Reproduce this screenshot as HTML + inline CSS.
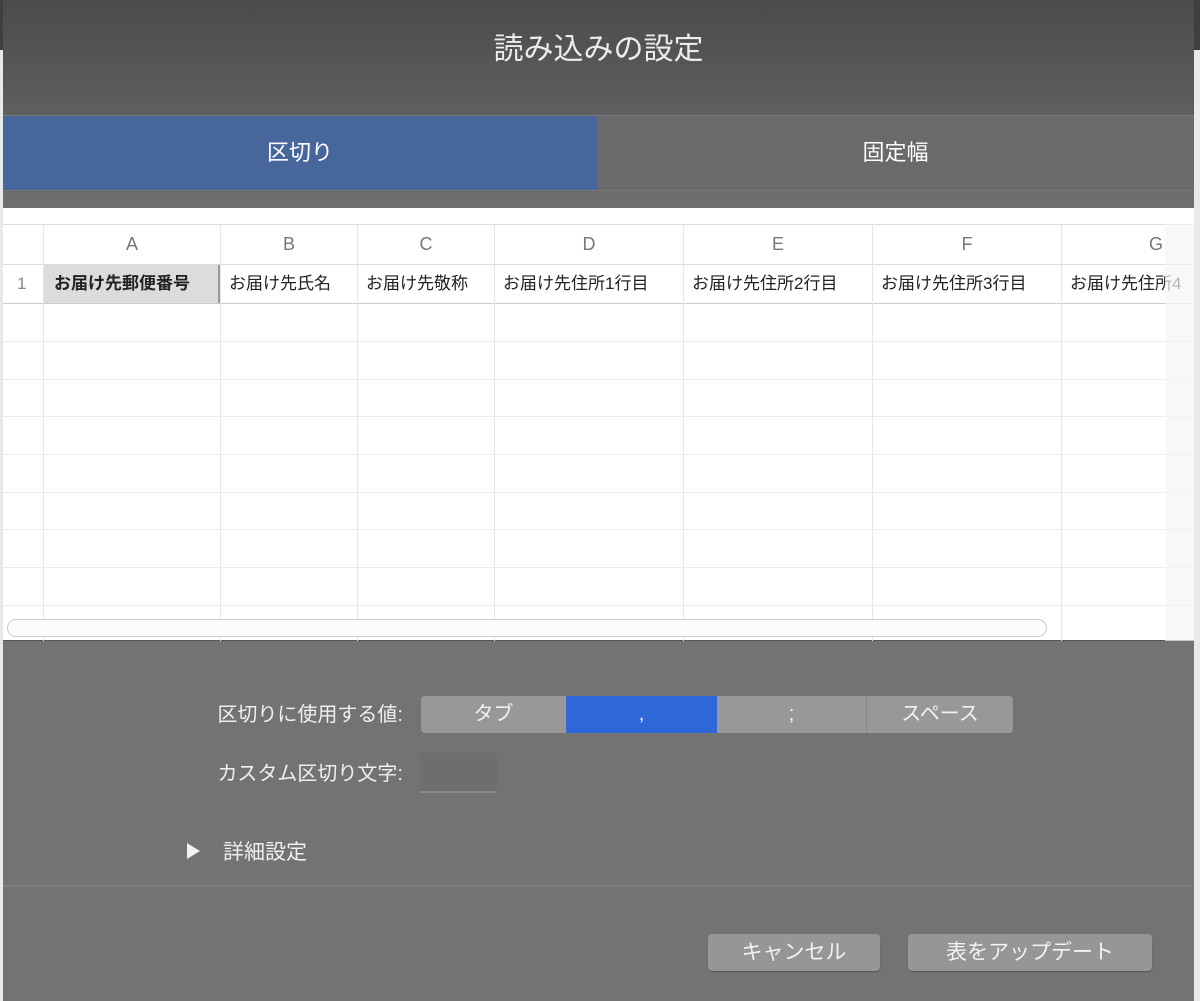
<!DOCTYPE html>
<html><head><meta charset="utf-8"><style>
*{margin:0;padding:0;box-sizing:border-box}
body{width:1200px;height:1001px;overflow:hidden;background:#e9e9e9;font-family:"Liberation Sans","Noto Sans CJK JP",sans-serif;position:relative}
.abs{position:absolute}
#dlg{left:3px;top:0;width:1191px;height:1001px;background:#737373;overflow:hidden}
#top{left:0;top:0;width:1191px;height:208px;background:linear-gradient(#4b4b4b,#6f6f6f)}
.t{color:#ececec;text-align:center}
#sheet{left:0;top:208px;width:1191px;height:433px;background:#fff;border-bottom:1px solid #555}
.vl{position:absolute;top:16px;height:417px;width:1px;background:#e6e6e6}
.hl{position:absolute;left:0;width:1191px;height:1px;background:#ececec}
.hc{position:absolute;top:16px;height:40px;line-height:40px;text-align:center;color:#777;font-size:18px}
.rc{position:absolute;top:57px;height:38px;line-height:38px;font-size:17px;color:#222;white-space:nowrap;overflow:hidden;padding-left:8px}
.seg{position:absolute;top:696px;height:37px;line-height:37px;text-align:center;color:#f2f2f2;font-size:20px;background:#989898}
.btn{position:absolute;top:934px;height:37px;line-height:37px;text-align:center;color:#f2f2f2;font-size:21px;background:#969696;border-radius:4px;box-shadow:0 1px 1px #555}
.lab{position:absolute;color:#efefef;font-size:20px;text-align:right;width:300px}
</style></head><body>
<div class="abs" style="left:0;top:0;width:1200px;height:50px;background:#3f3f3f"></div>
<div id="dlg" class="abs">
 <div id="top" class="abs"></div>
 <div class="abs t" style="left:0;top:30px;width:1191px;font-size:30px;line-height:40px">読み込みの設定</div>
 <div class="abs" style="left:0;top:115px;width:1191px;height:1px;background:#777"></div>
 <div class="abs" style="left:0;top:116px;width:594px;height:74px;background:#47679c"></div>
 <div class="abs" style="left:594px;top:116px;width:597px;height:74px;background:#6a6a6a"></div>
 <div class="abs" style="left:0;top:190px;width:1191px;height:1px;background:#777"></div>
 <div class="abs t" style="left:0;top:136px;width:594px;font-size:22px;line-height:34px;color:#fff">区切り</div>
 <div class="abs t" style="left:594px;top:136px;width:597px;font-size:22px;line-height:34px;color:#fff">固定幅</div>
 <div id="sheet" class="abs">
  <div class="hl" style="top:16px;background:#ddd"></div>
  <div class="hl" style="top:56px;background:#ddd"></div>
  <div class="hl" style="top:95px;background:#ccc"></div>
  <div class="hl" style="top:133px"></div><div class="hl" style="top:171px"></div><div class="hl" style="top:208px"></div><div class="hl" style="top:246px"></div><div class="hl" style="top:284px"></div><div class="hl" style="top:321px"></div><div class="hl" style="top:359px"></div><div class="hl" style="top:397px"></div>
  <div class="vl" style="left:40px"></div><div class="vl" style="left:217px"></div><div class="vl" style="left:354px"></div><div class="vl" style="left:491px"></div><div class="vl" style="left:680px"></div><div class="vl" style="left:869px"></div><div class="vl" style="left:1058px"></div>
  <div class="hc" style="left:41px;width:176px">A</div><div class="hc" style="left:218px;width:136px">B</div><div class="hc" style="left:355px;width:136px">C</div><div class="hc" style="left:492px;width:188px">D</div><div class="hc" style="left:681px;width:188px">E</div><div class="hc" style="left:870px;width:188px">F</div><div class="hc" style="left:1059px;width:188px">G</div>
  <div class="rc" style="left:0;width:40px;color:#888;padding-left:14px">1</div>
  <div class="rc" style="left:41px;width:176px;background:#dcdcdc;font-weight:bold;border-right:2px solid #999;padding-left:10px">お届け先郵便番号</div>
  <div class="rc" style="left:218px;width:136px">お届け先氏名</div>
  <div class="rc" style="left:355px;width:136px">お届け先敬称</div>
  <div class="rc" style="left:492px;width:188px">お届け先住所1行目</div>
  <div class="rc" style="left:681px;width:188px">お届け先住所2行目</div>
  <div class="rc" style="left:870px;width:188px">お届け先住所3行目</div>
  <div class="rc" style="left:1059px;width:132px">お届け先住所4</div>
  <div class="abs" style="left:1162px;top:16px;width:29px;height:417px;background:rgba(245,245,245,.7)"></div>
  <div class="abs" style="left:4px;top:411px;width:1040px;height:18px;border:1px solid #ccc;border-radius:9px;background:#fcfcfc"></div>
 </div>
 <div class="lab" style="left:100px;top:700px;line-height:30px">区切りに使用する値:</div>
 <div class="seg" style="left:418px;width:145px;border-radius:4px 0 0 4px">タブ</div>
 <div class="seg" style="left:563px;width:151px;background:#2f67d8">,</div>
 <div class="seg" style="left:714px;width:149px">;</div>
 <div class="seg" style="left:863px;width:147px;border-left:1px solid #888;border-radius:0 4px 4px 0">スペース</div>
 <div class="lab" style="left:100px;top:759px;line-height:30px">カスタム区切り文字:</div>
 <div class="abs" style="left:417px;top:753px;width:77px;height:40px;background:#6e6e6e;border-bottom:2px solid #888"></div>
 <div class="abs" style="left:184px;top:843px;width:0;height:0;border-left:13px solid #f2f2f2;border-top:8px solid transparent;border-bottom:8px solid transparent"></div>
 <div class="abs" style="left:220px;top:838px;color:#efefef;font-size:21px;line-height:30px">詳細設定</div>
 <div class="abs" style="left:0;top:885px;width:1191px;height:2px;background:#7e7e7e"></div>
 <div class="btn" style="left:705px;width:172px">キャンセル</div>
 <div class="btn" style="left:905px;width:244px">表をアップデート</div>
</div>
</body></html>
